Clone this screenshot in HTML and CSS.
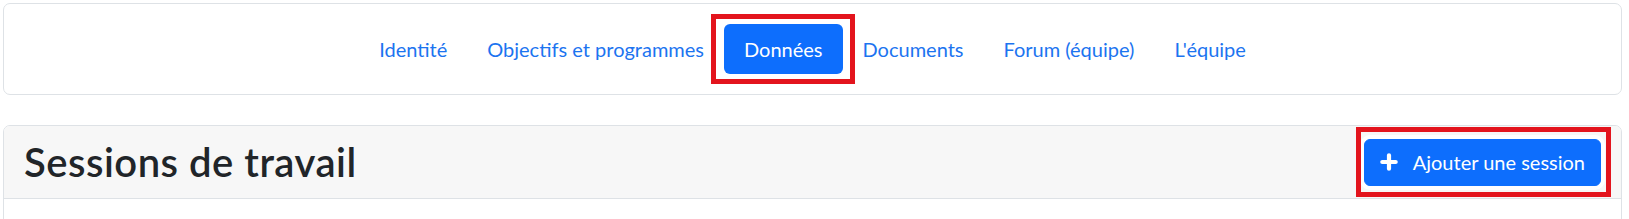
FILE: index.html
```html
<!DOCTYPE html>
<html lang="fr">
<head>
    <meta charset="UTF-8">
    <meta name="viewport" content="width=device-width, initial-scale=1.0">
    <title>Sessions de travail</title>
    <link rel="stylesheet" href="styles.css">
</head>
<body>

<!-- Onglets du projet -->
<div class="card nav-card">
    <ul class="nav">
        <li><a class="nav-link" href="#">Identité</a></li>
        <li><a class="nav-link" href="#">Objectifs et programmes</a></li>
        <li><a class="nav-link active marked marked-tab" href="#">Données</a></li>
        <li><a class="nav-link" href="#">Documents</a></li>
        <li><a class="nav-link" href="#">Forum (équipe)</a></li>
        <li><a class="nav-link" href="#">L'équipe</a></li>
    </ul>
</div>

<div class="card sessions-card">
    <div class="card-header">
        <h2>Sessions de travail</h2>
        <button type="button" class="btn btn-primary marked marked-btn">
            <svg class="icon-plus" width="18" height="18" viewBox="0 0 18 18" aria-hidden="true">
                <path d="M9 2.3V15.7M2.3 9H15.7" stroke="#fff" stroke-width="4.2" stroke-linecap="round" fill="none"/>
            </svg>
            Ajouter une session
        </button>
    </div>
    <div class="card-body"></div>
</div>

</body>
</html>
```

FILE: styles.css
```css
body {
    font-family: 'Lato', 'Noto Sans', sans-serif;
    margin: 3px 7px 0 3px;
    background-color: #fff;
    color: #212529;
}

.card {
    border: 1px solid #dee2e6;
    border-radius: 7px;
    background-color: #fff;
}

.nav-card {
    padding: 20px;
}

.nav {
    display: flex;
    justify-content: center;
    list-style: none;
    margin: 0;
    padding: 0;
}

.nav-link {
    display: block;
    padding: 10px 20px;
    font-size: 20px;
    line-height: 30px;
    color: #1c74f0;
    text-decoration: none;
    border-radius: 6px;
}

.nav-link.active {
    background-color: #0d6efd;
    color: #fff;
}

.sessions-card {
    margin-top: 30px;
}

.card-header {
    display: flex;
    justify-content: space-between;
    align-items: center;
    padding: 12px 20px;
    background-color: #f7f7f7;
    border-bottom: 1px solid #dee2e6;
    border-radius: 6px 6px 0 0;
}

.card-header h2 {
    margin: 0;
    font-size: 40px;
    line-height: 48px;
    font-weight: 600;
    letter-spacing: 0.5px;
    color: #212529;
}

.card-body {
    min-height: 60px;
}

.btn {
    display: inline-flex;
    align-items: center;
    padding: 7.5px 15px;
    font-family: inherit;
    font-size: 20px;
    line-height: 30px;
    border-radius: 6px;
    cursor: pointer;
}

.btn-primary {
    background-color: #0d6efd;
    border: 1px solid #0d6efd;
    color: #fff;
}

.icon-plus {
    margin-right: 15px;
}

/* Encadrés rouges de l'annotation */
.marked {
    position: relative;
}

.marked::after {
    content: "";
    position: absolute;
    border: 5px solid #e3141d;
    pointer-events: none;
}

.marked-tab {
    box-shadow: -3px 0 0 5px #fff, 2px 0 0 5px #fff;
}

.marked-tab::after {
    top: -10px;
    bottom: -10px;
    left: -13px;
    right: -12px;
}

.marked-btn {
    box-shadow: 0 0 0 4px #fff;
}

.marked-btn::after {
    top: -13px;
    bottom: -12px;
    left: -9px;
    right: -11px;
}
```
